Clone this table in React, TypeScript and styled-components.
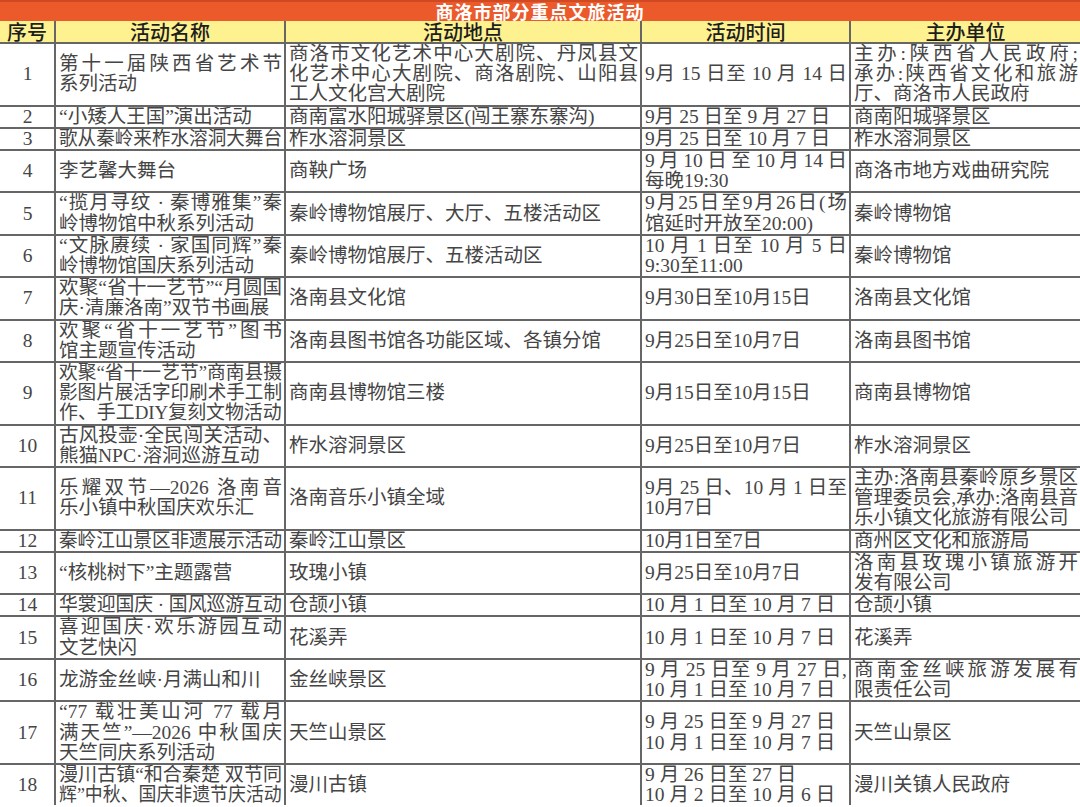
import React, { useLayoutEffect, useRef, useState } from 'react'
import styled, { createGlobalStyle } from 'styled-components'

const GlobalStyle = createGlobalStyle`
  html, body {
    margin: 0;
    padding: 0;
    background: #ffffff;
  }
`

const Page = styled.div`
  width: 1080px;
  height: 807px;
  overflow: hidden;
  font-family: "Liberation Serif", "Noto Sans CJK SC", serif;
`

const TitleBar = styled.div`
  height: 21px;
  background: #ec5a2b;
  box-shadow: inset 0 2px 0 #cf4a22;
  color: #ffffff;
  font-family: "Noto Sans CJK SC", sans-serif;
  font-size: 18px;
  font-weight: 700;
  line-height: 23px;
  text-align: center;
  letter-spacing: 1px;
`

const Table = styled.table`
  width: 1080px;
  table-layout: fixed;
  border-collapse: collapse;
  border-style: hidden;
`

const HeadCell = styled.th`
  height: 21px;
  padding: 0;
  background: #fdf190;
  border: 2px solid #666666;
  border-top: none;
  color: #1e1e1e;
  font-family: "Noto Sans CJK SC", sans-serif;
  font-size: 20px;
  font-weight: 500;
  line-height: 21px;
  text-align: center;
`

const Cell = styled.td<{ $center?: boolean }>`
  padding: 0 2px 0 3px;
  border: 2px solid #666666;
  vertical-align: middle;
  color: #454545;
  font-size: 19.5px;
  line-height: 20.2px;
  text-align: ${p => (p.$center ? 'center' : 'left')};
  overflow: hidden;
`

const LineBox = styled.div<{ $justify?: boolean }>`
  white-space: nowrap;
  text-align-last: ${p => (p.$justify ? 'justify' : 'auto')};
  transform-origin: left center;
`

function Line({ text, justify }: { text: string; justify: boolean }) {
  const ref = useRef<HTMLDivElement>(null)
  const [fit, setFit] = useState<{ w: number; s: number } | null>(null)

  useLayoutEffect(() => {
    const el = ref.current
    if (!el) return
    const avail = el.clientWidth
    const need = el.scrollWidth
    if (need > avail + 0.5) setFit({ w: need, s: avail / need })
  }, [text])

  return (
    <LineBox
      ref={ref}
      $justify={justify}
      style={fit ? { width: fit.w, transform: `scaleX(${fit.s})` } : undefined}
    >
      {text}
    </LineBox>
  )
}

// "^" at the start of a line: the line is spread to the full cell width
function CellText({ value }: { value: string }) {
  return (
    <>
      {value.split('\n').map((l, i) => (
        <Line key={i} text={l.replace(/^\^/, '')} justify={l.startsWith('^')} />
      ))}
    </>
  )
}

type Row = [string, string, string, string]

const rows: Row[] = [
  [
    '^第十一届陕西省艺术节\n系列活动',
    '^商洛市文化艺术中心大剧院、丹凤县文\n^化艺术中心大剧院、商洛剧院、山阳县\n工人文化宫大剧院',
    '^9月 15 日至 10 月 14 日',
    '^主办:陕西省人民政府;\n^承办:陕西省文化和旅游\n厅、商洛市人民政府',
  ],
  ['“小矮人王国”演出活动', '商南富水阳城驿景区(闯王寨东寨沟)', '9月 25 日至 9 月 27 日', '商南阳城驿景区'],
  ['^歌从秦岭来柞水溶洞大舞台', '柞水溶洞景区', '9月 25 日至 10 月 7 日', '柞水溶洞景区'],
  ['李艺馨大舞台', '商鞅广场', '^9月10日至10月14日\n每晚19:30', '商洛市地方戏曲研究院'],
  [
    '^“揽月寻纹 · 秦博雅集”秦\n岭博物馆中秋系列活动',
    '秦岭博物馆展厅、大厅、五楼活动区',
    '^9月25日至9月26日(场\n馆延时开放至20:00)',
    '秦岭博物馆',
  ],
  [
    '^“文脉赓续 · 家国同辉”秦\n岭博物馆国庆系列活动',
    '秦岭博物馆展厅、五楼活动区',
    '^10 月 1 日至 10 月 5 日\n9:30至11:00',
    '秦岭博物馆',
  ],
  ['^欢聚“省十一艺节”“月圆国\n庆·清廉洛南”双节书画展', '洛南县文化馆', '9月30日至10月15日', '洛南县文化馆'],
  ['^欢聚“省十一艺节”图书\n馆主题宣传活动', '洛南县图书馆各功能区域、各镇分馆', '9月25日至10月7日', '洛南县图书馆'],
  [
    '^欢聚“省十一艺节”商南县摄\n^影图片展活字印刷术手工制\n作、手工DIY复刻文物活动',
    '商南县博物馆三楼',
    '9月15日至10月15日',
    '商南县博物馆',
  ],
  ['^古风投壶·全民闯关活动、\n熊猫NPC·溶洞巡游互动', '柞水溶洞景区', '9月25日至10月7日', '柞水溶洞景区'],
  [
    '^乐耀双节—2026 洛南音\n乐小镇中秋国庆欢乐汇',
    '洛南音乐小镇全域',
    '^9月 25 日、10 月 1 日至\n10月7日',
    '^主办:洛南县秦岭原乡景区\n^管理委员会,承办:洛南县音\n乐小镇文化旅游有限公司',
  ],
  ['秦岭江山景区非遗展示活动', '秦岭江山景区', '10月1日至7日', '商州区文化和旅游局'],
  ['“核桃树下”主题露营', '玫瑰小镇', '9月25日至10月7日', '^洛南县玫瑰小镇旅游开\n发有限公司'],
  ['华裳迎国庆 · 国风巡游互动', '仓颉小镇', '10 月 1 日至 10 月 7 日', '仓颉小镇'],
  ['^喜迎国庆·欢乐游园互动\n文艺快闪', '花溪弄', '10 月 1 日至 10 月 7 日', '花溪弄'],
  [
    '龙游金丝峡·月满山和川',
    '金丝峡景区',
    '^9 月 25 日至 9 月 27 日,\n10 月 1 日至 10 月 7 日',
    '^商南金丝峡旅游发展有\n限责任公司',
  ],
  [
    '^“77 载壮美山河 77 载月\n^满天竺”—2026 中秋国庆\n天竺同庆系列活动',
    '天竺山景区',
    '9 月 25 日至 9 月 27 日\n10 月 1 日至 10 月 7 日',
    '天竺山景区',
  ],
  [
    '^漫川古镇“和合秦楚 双节同\n辉”中秋、国庆非遗节庆活动',
    '漫川古镇',
    '9 月 26 日至 27 日\n10 月 2 日至 10 月 6 日',
    '漫川关镇人民政府',
  ],
]

const headings = ['序号', '活动名称', '活动地点', '活动时间', '主办单位']
const widths = [55, 230, 356, 209, 230]

export default function App() {
  return (
    <Page>
      <GlobalStyle />
      <TitleBar>商洛市部分重点文旅活动</TitleBar>
      <Table>
        <colgroup>
          {widths.map((w, i) => (
            <col key={i} style={{ width: w }} />
          ))}
        </colgroup>
        <thead>
          <tr>
            {headings.map(h => (
              <HeadCell key={h}>{h}</HeadCell>
            ))}
          </tr>
        </thead>
        <tbody>
          {rows.map((r, i) => (
            <tr key={i}>
              <Cell $center>{i + 1}</Cell>
              {r.map((c, j) => (
                <Cell key={j}>
                  <CellText value={c} />
                </Cell>
              ))}
            </tr>
          ))}
        </tbody>
      </Table>
    </Page>
  )
}
